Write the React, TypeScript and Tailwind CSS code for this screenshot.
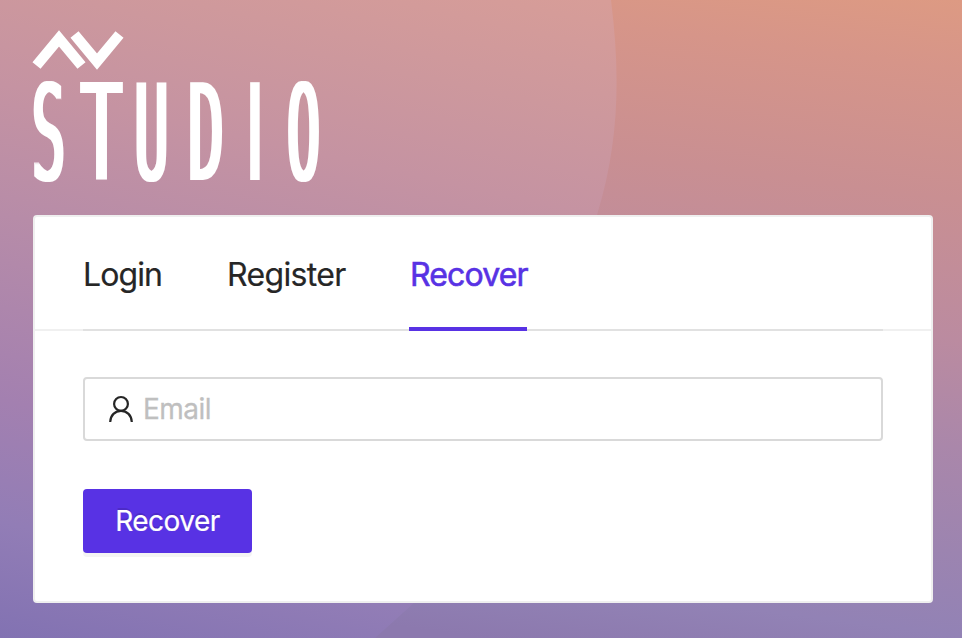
// Each letter is squeezed horizontally, then its stems are thickened by the filter.
const letters = [
  { char: "S", x: 48.5, squeeze: 0.41 },
  { char: "T", x: 101.5, squeeze: 0.52 },
  { char: "U", x: 151.5, squeeze: 0.42 },
  { char: "D", x: 206, squeeze: 0.44 },
  { char: "I", x: 255, squeeze: 0.42 },
  { char: "O", x: 303.5, squeeze: 0.41 },
];

function Logo() {
  return (
    <svg className="ml-[33px] block overflow-visible" width="287" height="151" viewBox="33 30 287 151" aria-label="AV Studio">
      <defs>
        <filter id="stems" filterUnits="userSpaceOnUse" x="20" y="70" width="320" height="125">
          <feMorphology operator="dilate" radius="2 0" />
        </filter>
      </defs>
      <g fill="none" stroke="#fff" strokeWidth="10.5">
        <path d="M36.5 65.5L59 38.5L81.5 65.5" />
        <path d="M74.5 34.5L97 61.5L119.5 34.5" />
      </g>
      <g filter="url(#stems)" fill="#fff">
        {letters.map((l) => (
          <text
            key={l.char}
            transform={`translate(${l.x} 180) scale(${l.squeeze} 1)`}
            textAnchor="middle"
            className={
              l.char === "I"
                ? "font-[Roboto,sans-serif] text-[138px]"
                : "font-['DejaVu_Sans_Mono',monospace] text-[134px]"
            }
          >
            {l.char}
          </text>
        ))}
      </g>
    </svg>
  );
}

function Backdrop() {
  return (
    <svg className="absolute inset-0 -z-10" width="962" height="638" viewBox="0 0 962 638">
      <defs>
        <linearGradient id="sky" gradientUnits="userSpaceOnUse" x1="962" y1="0" x2="872.5" y2="688">
          <stop offset="0" stopColor="#dd9a83" />
          <stop offset="0.1" stopColor="#d69589" />
          <stop offset="0.286" stopColor="#c98f92" />
          <stop offset="0.486" stopColor="#bb8ba0" />
          <stop offset="0.64" stopColor="#aa87aa" />
          <stop offset="0.79" stopColor="#9c84b0" />
          <stop offset="0.91" stopColor="#9282b5" />
          <stop offset="1" stopColor="#8c79ae" />
        </linearGradient>
        <linearGradient id="disc" gradientUnits="userSpaceOnUse" x1="600" y1="0" x2="438.5" y2="734">
          <stop offset="0" stopColor="#d79d98" />
          <stop offset="0.15" stopColor="#cd989d" />
          <stop offset="0.28" stopColor="#c593a2" />
          <stop offset="0.45" stopColor="#b78ca8" />
          <stop offset="0.69" stopColor="#a380b0" />
          <stop offset="0.85" stopColor="#927db6" />
          <stop offset="1" stopColor="#8272b2" />
        </linearGradient>
      </defs>
      <rect width="962" height="638" fill="url(#sky)" />
      <path d="M0 0H611C620 72 620 140 597 215C560 370 510 500 415 602L375 638H0Z" fill="url(#disc)" />
    </svg>
  );
}

function UserIcon() {
  return (
    <svg width="28" height="28" viewBox="0 0 28 28" fill="none" stroke="#262626" strokeWidth="2.2">
      <circle cx="14" cy="8.9" r="6.9" />
      <path d="M3.2 27C3.5 20.3 8 15.8 14 15.8S24.5 20.3 24.8 27" />
    </svg>
  );
}

export default function App() {
  return (
    <main className="relative isolate h-[638px] w-[962px] overflow-hidden pt-[30px] font-[Inter,sans-serif] text-[#262626]">
      <Backdrop />
      <Logo />
      <section className="mt-[34px] ml-[33px] h-[388px] w-[900px] rounded border-2 border-[#efefef] bg-white">
        <header className="h-[114px] border-b-2 border-[#f0f0f0] px-12">
          <nav className="flex h-[114px] items-stretch gap-16 border-b-2 border-[#e1e1e1] text-[32px] leading-[116px]">
            <button className="w-[79px] text-left whitespace-nowrap tracking-[-0.9px] [-webkit-text-stroke:0.2px]">Login</button>
            <button className="w-[119px] pl-px text-left whitespace-nowrap tracking-[-0.65px] [-webkit-text-stroke:0.2px]">Register</button>
            <button className="h-[114px] w-[118px] border-b-4 border-[#5832e4] pl-px text-left whitespace-nowrap tracking-[-0.85px] text-[#5832e4] [-webkit-text-stroke:0.6px]">Recover</button>
          </nav>
        </header>
        <form className="px-12 pt-[46px]">
          <label className="flex h-16 items-center rounded border-2 border-[#d9d9d9] pl-[22px]">
            <UserIcon />
            <input
              placeholder="Email"
              className="ml-2 min-w-0 flex-1 text-[28px] tracking-[-0.5px] outline-none [-webkit-text-stroke:0.3px] placeholder:text-[#bfbfbf]"
            />
          </label>
          <button
            type="button"
            className="mt-12 h-16 w-[169px] rounded bg-[#5832e4] text-[28px] tracking-[-0.5px] text-white shadow-[0_4px_0_rgba(0,0,0,0.045)] [-webkit-text-stroke:0.2px] [text-shadow:0_-2px_0_rgba(0,0,0,0.12)]"
          >
            Recover
          </button>
        </form>
      </section>
    </main>
  );
}
